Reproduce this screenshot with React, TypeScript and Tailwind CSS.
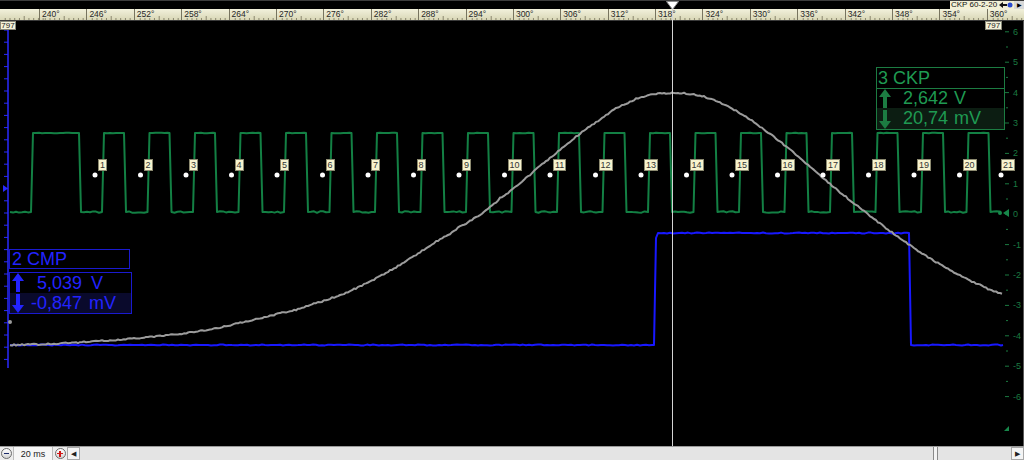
import React from 'react';

// deterministic jitter so the traces look sampled, not drawn
const n = (i: number) => {
  const s = Math.sin(i * 78.233 + 12.345) * 43758.5453;
  return s - Math.floor(s);
};

const LOW = 212;
const HIGH = 133;
const RISES = Array.from({ length: 20 }, (_, i) => 103 + 45.5 * i);
const DEG = [240, 246, 252, 258, 264, 270, 276, 282, 288, 294, 300, 306, 312, 318, 324, 330, 336, 342, 348, 354, 360];

function flat(d: string[], x0: number, x1: number, y: number, amp: number) {
  for (let x = x0 + 3; x < x1 - 1; x += 3) d.push(`L${x.toFixed(1)} ${(y + (n(x) - 0.5) * amp).toFixed(1)}`);
  d.push(`L${x1.toFixed(1)} ${y}`);
}

function ckpPath() {
  const d = [`M10 ${LOW}`];
  flat(d, 10, 31, LOW, 1.6);
  d.push(`L33 ${HIGH}`);
  flat(d, 33, 79, HIGH, 0.6);
  d.push(`L81 ${LOW}`);
  let prev = 81;
  for (const r of RISES) {
    flat(d, prev, r - 1, LOW, 1.6);
    d.push(`L${r + 1} ${HIGH}`);
    flat(d, r + 1, r + 21, HIGH, 0.6);
    d.push(`L${r + 23} ${LOW}`);
    prev = r + 23;
  }
  flat(d, prev, 1001, LOW, 1.6);
  return d.join(' ');
}

function cmpPath() {
  const d = ['M10 345'];
  flat(d, 10, 654, 345, 1);
  d.push('L656 238 L658 233');
  flat(d, 658, 909, 233, 1);
  d.push('L911 345');
  flat(d, 911, 1003, 345, 1);
  return d.join(' ');
}

const G: [number, number][] = [
  [10, 345], [100, 341], [200, 331], [300, 309], [350, 291], [400, 265], [450, 234], [473, 219],
  [500, 198], [550, 158], [600, 120], [630, 102], [650, 95], [670, 93], [690, 94], [710, 99],
  [740, 113], [770, 134], [800, 158], [830, 184], [860, 208], [890, 231], [920, 252], [950, 270],
  [980, 285], [1003, 294],
];

function grayPath() {
  const d: string[] = [];
  for (let x = 10; x <= 1003; x += 2) {
    let j = 0;
    while (j < G.length - 2 && G[j + 1][0] < x) j++;
    const p0 = G[Math.max(0, j - 1)][1];
    const [x1, p1] = G[j];
    const [x2, p2] = G[j + 1];
    const p3 = G[Math.min(G.length - 1, j + 2)][1];
    const t = (x - x1) / (x2 - x1);
    const y =
      0.5 * (2 * p1 + (-p0 + p2) * t + (2 * p0 - 5 * p1 + 4 * p2 - p3) * t * t + (-p0 + 3 * p1 - 3 * p2 + p3) * t * t * t) +
      (n(x * 1.7) - 0.5) * 1.4;
    d.push(`${d.length ? 'L' : 'M'}${x} ${y.toFixed(1)}`);
  }
  return d.join(' ');
}

const AXIS = Array.from({ length: 13 }, (_, k) => ({ v: 6 - k, y: 31.8 + 30.4 * k }));

const Arrow = ({ color }: { color: string }) => (
  <svg width="12" height="40" viewBox="0 0 12 40">
    <polygon points="6,0 12,8 8,8 8,19 4,19 4,8 0,8" fill={color} />
    <polygon points="4,21 8,21 8,32 12,32 6,40 0,32 4,32" fill={color} />
  </svg>
);

function Ruler() {
  return (
    <div className="flex h-[12px] shrink-0 border-b border-[#3a3a3a] bg-gradient-to-b from-[#f2f1dc] to-[#d9d7b6]">
      <div className="relative w-[39px] shrink-0">
        <Ticks />
      </div>
      {DEG.map((d, i) => (
        <div key={d} className={`relative shrink-0 border-l border-[#77745f] ${i === 20 ? 'flex-1' : 'w-[47.4px]'}`}>
          <span className="block pl-[2px] pt-[1px] text-[8.5px] leading-[8px] text-[#262626]">{d}°</span>
          <Ticks />
        </div>
      ))}
    </div>
  );
}

function Ticks() {
  return (
    <svg className="absolute bottom-0 left-0" width="48" height="4">
      {Array.from({ length: 9 }, (_, i) => (
        <rect key={i} x={4.74 * (i + 1)} y={i === 4 ? 0 : 2} width="1" height={i === 4 ? 4 : 2} fill="#8a876e" />
      ))}
    </svg>
  );
}

function Plot() {
  return (
    <div className="relative h-[425px] shrink-0 bg-black">
      <svg className="absolute inset-0" width="1024" height="425" viewBox="0 21 1024 425">
        {/* left axis (CMP) */}
        <line x1="8" y1="25" x2="8" y2="368" stroke="#2a2aff" strokeWidth="1.5" />
        {Array.from({ length: 28 }, (_, i) => (
          <line key={i} x1="4" x2="8" y1={30 + 12.2 * i} y2={30 + 12.2 * i} stroke="#2a2aff" strokeWidth="1" />
        ))}
        <polygon points="3,185 8,188.5 3,192" fill="#2a2aff" />
        <circle cx="10" cy="322" r="2" fill="#9a9a9a" />

        {/* right axis (CKP) */}
        {AXIS.map((a) => (
          <g key={a.v}>
            <line x1="1005" x2="1009" y1={a.y} y2={a.y} stroke="#1b7a40" strokeWidth="1" />
            {a.v > -6 && <line x1="1006" x2="1008" y1={a.y + 15.2} y2={a.y + 15.2} stroke="#1b7a40" strokeWidth="1" />}
          </g>
        ))}
        <polygon points="1003,213 1009,209 1009,217" fill="#17874a" />
        <polygon points="1004,431 1009,431 1009,426" fill="#17874a" />
        <line x1="1023.5" y1="21" x2="1023.5" y2="446" stroke="#5a5a5a" />

        {/* traces */}
        <path d={cmpPath()} fill="none" stroke="#1818ff" strokeWidth="2" strokeLinejoin="round" />
        <path d={ckpPath()} fill="none" stroke="#138044" strokeWidth="2" strokeLinejoin="round" />
        <circle cx="1000" cy="213" r="2" fill="#17874a" />
        <path d={grayPath()} fill="none" stroke="#9c9c9c" strokeWidth="2" strokeLinejoin="round" />
        {RISES.concat([1009]).map((r, i) => (
          <circle key={i} cx={r - 8} cy="175" r="2.5" fill="#ffffff" />
        ))}
      </svg>

      {/* tooth numbers */}
      {RISES.concat([1006]).map((r, i) => (
        <div
          key={i}
          className="absolute top-[138px] h-[12px] min-w-[9px] border border-[#8c8a70] bg-[#f7f3cf] px-[1px] text-center text-[9px] leading-[10px] text-[#333]"
          style={{ left: r - 5 }}
        >
          {i + 1}
        </div>
      ))}

      {/* 797 labels */}
      <div className="absolute left-0 top-0 h-[9px] w-[16px] border border-[#8a8a7a] bg-[#f4f1d8] text-center text-[8px] leading-[7px] text-[#222]">797</div>
      <div className="absolute left-[985px] top-0 h-[9px] w-[17px] border border-[#8a8a7a] bg-[#f4f1d8] text-center text-[8px] leading-[7px] text-[#222]">797</div>

      {/* right axis numbers */}
      {AXIS.map((a) => (
        <div key={a.v} className="absolute left-[1013px] text-[9px] leading-[10px] text-[#1b7a40]" style={{ top: a.y - 21 - 5 }}>
          {a.v}
        </div>
      ))}

      {/* CKP channel box */}
      <div className="absolute left-[876px] top-[46px] w-[129px]">
        <div className="h-[22px] border border-[#1c7c42] bg-black pl-[1px] text-[18px] leading-[20px] text-[#1f9a52]">3 CKP</div>
        <div className="relative h-[41px] border border-t-0 border-[#1c7c42] bg-black text-[18px] leading-[19px] text-[#1f9a52]">
          <div className="flex h-[19px] items-center">
            <span className="w-[71px] text-right">2,642</span>
            <span className="ml-[6px]">V</span>
          </div>
          <div className="flex h-[21px] items-center bg-[#0c1d12]">
            <span className="w-[71px] text-right">20,74</span>
            <span className="ml-[6px]">mV</span>
          </div>
          <div className="absolute left-[2px] top-0">
            <Arrow color="#1c7c42" />
          </div>
        </div>
      </div>

      {/* CMP channel box */}
      <div className="absolute left-[9px] top-[228px]">
        <div className="h-[20px] w-[121px] border border-[#1a1ad0] bg-black pl-[2px] text-[18px] leading-[19px] text-[#2323ff]">2 CMP</div>
        <div className="relative mt-[3px] h-[42px] w-[123px] border border-[#1a1ad0] bg-black text-[18px] leading-[20px] text-[#2323ff]">
          <div className="flex h-[20px] items-center">
            <span className="w-[72px] text-right">5,039</span>
            <span className="ml-[9px]">V</span>
          </div>
          <div className="flex h-[20px] items-center bg-[#0a0a2c]">
            <span className="w-[72px] text-right">-0,847</span>
            <span className="ml-[7px]">mV</span>
          </div>
          <div className="absolute left-[2px] top-0">
            <Arrow color="#2323ff" />
          </div>
        </div>
      </div>
    </div>
  );
}

function BottomBar() {
  return (
    <div className="flex h-[14px] shrink-0 items-stretch border-t border-[#9a9a9a] bg-[#ececec] text-[9px] text-[#222]">
      <div className="flex w-[13px] items-center justify-center">
        <div className="flex h-[11px] w-[11px] items-center justify-center rounded-full border border-[#6d6d6d] bg-gradient-to-b from-white to-[#d4d4d4]">
          <div className="h-[1.5px] w-[5px] bg-[#1a2a6a]" />
        </div>
      </div>
      <div className="flex w-[40px] items-center justify-center border-x border-[#bdbdbd] bg-[#f6f6f6] leading-[12px]">20 ms</div>
      <div className="flex w-[14px] items-center justify-center">
        <div className="relative flex h-[11px] w-[11px] items-center justify-center rounded-full border border-[#6d6d6d] bg-gradient-to-b from-white to-[#d4d4d4]">
          <div className="absolute h-[1.5px] w-[6px] bg-[#d01818]" />
          <div className="absolute h-[6px] w-[1.5px] bg-[#d01818]" />
        </div>
      </div>
      <div className="flex w-[13px] items-center justify-center border border-[#a8a8a8] bg-[#f4f4f4] text-[7px] leading-none">◀</div>
      <div className="relative flex-1 bg-[#e4e4e4]">
        <div className="absolute left-[853px] top-0 h-full w-[5px] border-x border-[#8a8a8a] bg-[#f2f2f2]" />
      </div>
      <div className="flex w-[13px] items-center justify-center border border-[#a8a8a8] bg-[#f4f4f4] text-[7px] leading-none">▶</div>
    </div>
  );
}

export default function App() {
  return (
    <div className="relative flex h-[460px] w-[1024px] flex-col overflow-hidden bg-black font-['Liberation_Sans',Arial,sans-serif]">
      {/* top strip */}
      <div className="flex h-[9px] shrink-0 justify-end border-t border-[#3c3c3c] bg-black">
        <div className="w-[48px] bg-[#f3f0d6] pl-[1px] text-[8px] leading-[8px] text-[#111]">CKP 60-2-20</div>
        <svg width="16" height="8" viewBox="0 0 16 8" className="bg-[#f3f0d6]">
          <path d="M1 4 L5 1 L5 3 L9 3 L9 5 L5 5 L5 7 Z" fill="#111" />
          <circle cx="12" cy="4" r="2.5" fill="#2a4ad0" />
        </svg>
        <div className="flex w-[10px] items-center justify-center bg-[#d8d8d8] text-[6px] leading-none text-black">▶</div>
      </div>
      <Ruler />
      <Plot />
      <BottomBar />

      {/* cursor */}
      <svg className="absolute left-[666px] top-[1px]" width="13" height="9" viewBox="0 0 13 9">
        <polygon points="0.5,0.5 12.5,0.5 6.5,8.5" fill="#ffffff" stroke="#8a8a8a" />
      </svg>
      <div className="absolute bottom-[14px] left-[672px] top-[9px] w-px bg-[#d4d4d4]" />
    </div>
  );
}
